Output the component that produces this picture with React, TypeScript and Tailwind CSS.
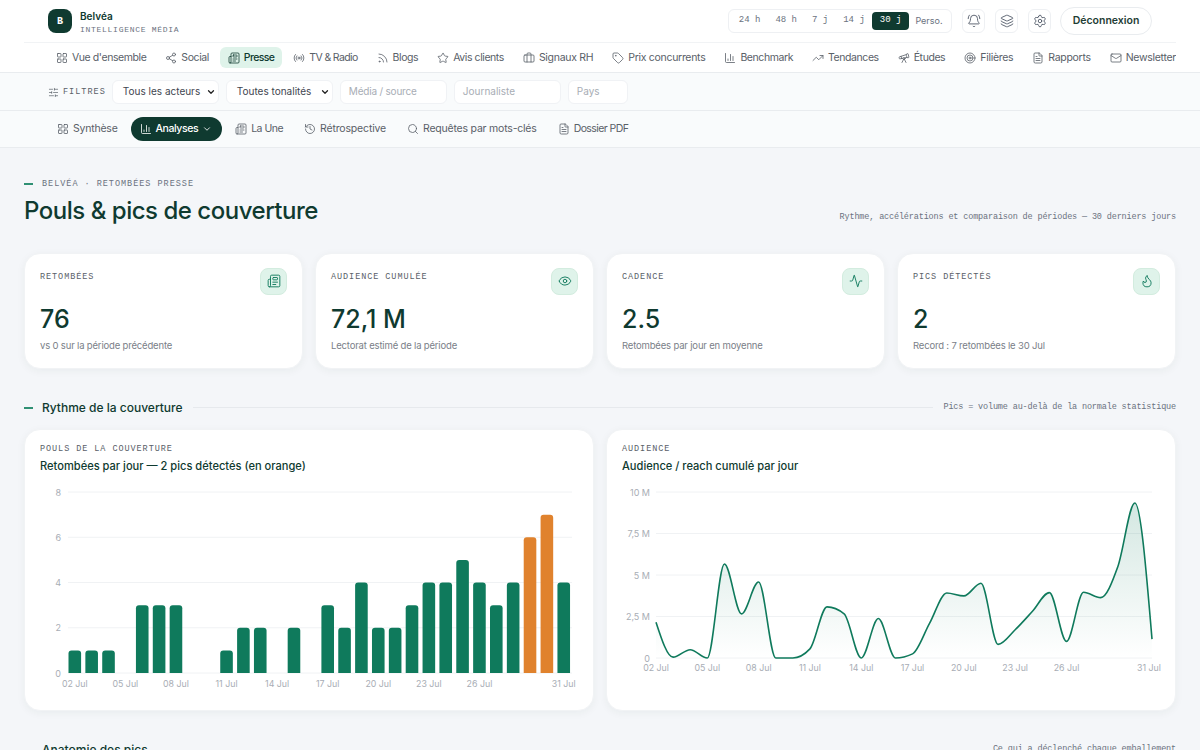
import {
  Activity,
  BellRing,
  Briefcase,
  ChartColumn,
  ChevronDown,
  Eye,
  FileText,
  Flame,
  History,
  Layers,
  LayoutGrid,
  Mail,
  Newspaper,
  Radio,
  Rss,
  Search,
  Settings,
  Share2,
  SlidersHorizontal,
  Star,
  Tag,
  Target,
  Telescope,
  TrendingUp,
} from "lucide-react";

const sans = "font-['Inter','Noto_Sans',sans-serif]";
const mono = "font-['Liberation_Mono','DejaVu_Sans_Mono',monospace]";

const mainNav = [
  { label: "Vue d'ensemble", icon: LayoutGrid, tight: "tracking-[-0.04em]" },
  { label: "Social", icon: Share2, tight: "tracking-[-0.04em]" },
  { label: "Presse", icon: Newspaper, active: true, tight: "tracking-[-0.06em]" },
  { label: "TV & Radio", icon: Radio, tight: "tracking-[-0.06em]" },
  { label: "Blogs", icon: Rss, tight: "tracking-[-0.04em]" },
  { label: "Avis clients", icon: Star, tight: "tracking-[-0.04em]" },
  { label: "Signaux RH", icon: Briefcase, tight: "tracking-[-0.028em]" },
  { label: "Prix concurrents", icon: Tag, tight: "tracking-[-0.028em]" },
  { label: "Benchmark", icon: ChartColumn, tight: "tracking-[-0.04em]" },
  { label: "Tendances", icon: TrendingUp, tight: "tracking-[-0.04em]" },
  { label: "Études", icon: Telescope, tight: "tracking-[-0.04em]" },
  { label: "Filières", icon: Target, tight: "tracking-[-0.028em]" },
  { label: "Rapports", icon: FileText, tight: "tracking-[-0.028em]" },
  { label: "Newsletter", icon: Mail, tight: "tracking-[-0.028em]" },
];

const subNav = [
  { label: "Synthèse", icon: LayoutGrid, tight: "tracking-[-0.02em]" },
  { label: "Analyses", icon: ChartColumn, active: true, tight: "tracking-[-0.04em]" },
  { label: "La Une", icon: Newspaper, tight: "tracking-[-0.05em]" },
  { label: "Rétrospective", icon: History, tight: "tracking-[-0.015em]" },
  { label: "Requêtes par mots-clés", icon: Search, tight: "tracking-[-0.02em]" },
  { label: "Dossier PDF", icon: FileText, tight: "tracking-[-0.055em]" },
];

const ranges = ["24 h", "48 h", "7 j", "14 j", "30 j"];

const kpis = [
  { label: "RETOMBÉES", value: "76", note: "vs 0 sur la période précédente", icon: Newspaper },
  { label: "AUDIENCE CUMULÉE", value: "72,1 M", note: "Lectorat estimé de la période", icon: Eye },
  { label: "CADENCE", value: "2.5", note: "Retombées par jour en moyenne", icon: Activity },
  { label: "PICS DÉTECTÉS", value: "2", note: "Record : 7 retombées le 30 Jul", icon: Flame },
];

const perDay = [1, 1, 1, 0, 3, 3, 3, 0, 0, 1, 2, 2, 0, 2, 0, 3, 2, 4, 2, 2, 3, 4, 4, 5, 4, 3, 4, 6, 7, 4];
const reach = [
  2.16, 0.05, 0.5, 0, 5.66, 2.66, 4.58, 0, 0, 0.55, 3.08, 2.66, 0, 2.38, 0, 0.25, 2.1, 3.92, 3.74, 4.5, 0.82, 1.7,
  2.8, 3.94, 1.0, 3.96, 3.64, 5.5, 9.34, 1.14,
];
const tickDays = [
  [0, "02 Jul"],
  [3, "05 Jul"],
  [6, "08 Jul"],
  [9, "11 Jul"],
  [12, "14 Jul"],
  [15, "17 Jul"],
  [18, "20 Jul"],
  [21, "23 Jul"],
  [24, "26 Jul"],
  [29, "31 Jul"],
] as const;

// same curve as d3 curveMonotoneX
function monotonePath(pts: [number, number][]) {
  const n = pts.length;
  const slopes: number[] = [];
  for (let i = 0; i < n - 1; i++) slopes.push((pts[i + 1][1] - pts[i][1]) / (pts[i + 1][0] - pts[i][0]));
  const t: number[] = new Array(n).fill(0);
  for (let i = 1; i < n - 1; i++) {
    const a = slopes[i - 1];
    const b = slopes[i];
    const s = (Math.sign(a) + Math.sign(b)) * Math.min(Math.abs(a), Math.abs(b), 0.25 * Math.abs(a + b));
    t[i] = s || 0;
  }
  t[0] = (3 * slopes[0] - t[1]) / 2;
  t[n - 1] = (3 * slopes[n - 2] - t[n - 2]) / 2;
  let d = `M${pts[0][0]},${pts[0][1]}`;
  for (let i = 0; i < n - 1; i++) {
    const h = (pts[i + 1][0] - pts[i][0]) / 3;
    d += `C${pts[i][0] + h},${pts[i][1] + h * t[i]} ${pts[i + 1][0] - h},${pts[i + 1][1] - h * t[i + 1]} ${pts[i + 1][0]},${pts[i + 1][1]}`;
  }
  return d;
}

function BarsChart() {
  const start = 28.5;
  const pitch = 16.86;
  const top = 8;
  const bottom = 189;
  const unit = (bottom - top) / 8;
  return (
    <svg width="544" height="212" className="block">
      {[8, 6, 4, 2, 0].map((v) => (
        <g key={v}>
          <line x1={28} x2={532} y1={bottom - v * unit} y2={bottom - v * unit} stroke="#f0f2f4" />
          <text x={21} y={bottom - v * unit + 3.5} textAnchor="end" fontSize="9" fill="#a8adb5" fontFamily="Inter">
            {v}
          </text>
        </g>
      ))}
      {perDay.map((v, i) =>
        v > 0 ? (
          <path
            key={i}
            d={`M${start + i * pitch},${bottom} v${-(v * unit - 3)} q0,-3 3,-3 h6.6 q3,0 3,3 V${bottom} z`}
            fill={i === 27 || i === 28 ? "#e0822d" : "#0f7a5c"}
          />
        ) : null,
      )}
      {tickDays.map(([i, label]) => (
        <text
          key={label}
          x={start + i * pitch + 6.3}
          y={203}
          textAnchor="middle"
          fontSize="8.8"
          fill="#a8adb5"
          fontFamily="Inter"
        >
          {label}
        </text>
      ))}
    </svg>
  );
}

function ReachChart() {
  const left = 34;
  const right = 530;
  const top = 8;
  const bottom = 174;
  const step = (right - left) / 29;
  const pts = reach.map((v, i) => [left + i * step, bottom - (v * (bottom - top)) / 10] as [number, number]);
  const line = monotonePath(pts);
  return (
    <svg width="544" height="212" className="block">
      <defs>
        <linearGradient id="reachFill" x1="0" y1="0" x2="0" y2="1">
          <stop offset="0%" stopColor="#0f7a5c" stopOpacity="0.18" />
          <stop offset="100%" stopColor="#0f7a5c" stopOpacity="0" />
        </linearGradient>
      </defs>
      {[
        [10, "10 M"],
        [7.5, "7,5 M"],
        [5, "5 M"],
        [2.5, "2,5 M"],
        [0, "0"],
      ].map(([v, label]) => {
        const y = bottom - ((v as number) * (bottom - top)) / 10;
        return (
          <g key={label}>
            <line x1={left} x2={right} y1={y} y2={y} stroke="#f0f2f4" />
            <text x={28} y={y + 3.5} textAnchor="end" fontSize="9" fill="#a8adb5" fontFamily="Inter">
              {label}
            </text>
          </g>
        );
      })}
      <path d={`${line}L${right},${bottom}L${left},${bottom}Z`} fill="url(#reachFill)" />
      <path d={line} fill="none" stroke="#0f7a5c" strokeWidth="1.6" />
      {tickDays.map(([i, label]) => (
        <text
          key={label}
          x={i === 29 ? 527 : left + i * step}
          y={187}
          textAnchor="middle"
          fontSize="8.8"
          fill="#a8adb5"
          fontFamily="Inter"
        >
          {label}
        </text>
      ))}
    </svg>
  );
}

export default function App() {
  return (
    <div className={`h-screen overflow-hidden bg-[#f4f6f9] text-[#0f3a30] ${sans}`}>
      {/* Header */}
      <header className="bg-white border-b border-[#e9ecef]">
        <div className="h-[43px] mx-6 px-6 flex items-center justify-between border-b border-[#f1f3f5]">
          <div className="flex items-center gap-2">
            <div className={`w-6 h-6 rounded-lg bg-[#0f3a30] text-white flex items-center justify-center text-[10px] font-bold ${mono}`}>
              B
            </div>
            <div className="pt-[4px]">
              <div className="text-[10px] leading-[14px] font-semibold">Belvéa</div>
              <div className={`text-[8px] leading-[14px] tracking-[0.09em] text-[#6b7280] ${mono}`}>INTELLIGENCE MÉDIA</div>
            </div>
          </div>
          <div className="flex items-center gap-[10px]">
            <div className="h-6 flex items-center rounded-md border border-[#eef0f3] px-[2px] bg-white">
              {ranges.map((r) => (
                <span
                  key={r}
                  className={`h-[18px] px-[7.5px] flex items-center justify-center rounded text-[9px] whitespace-pre ${mono} ${
                    r === "30 j" ? "bg-[#0f3a30] text-white" : "text-[#6b7280]"
                  }`}
                >
                  {r}
                </span>
              ))}
              <span className="px-[6.5px] text-center text-[9px] text-[#6b7280]">Perso.</span>
            </div>
            <div className="w-[23px] h-6 rounded-md border border-[#eef0f3] flex items-center justify-center text-[#4b5563]">
              <BellRing size={14} strokeWidth={1.5} />
            </div>
            <div className="w-[23px] h-6 rounded-md border border-[#eef0f3] flex items-center justify-center text-[#4b5563]">
              <Layers size={14} strokeWidth={1.5} />
            </div>
            <div className="w-[23px] h-6 rounded-md border border-[#eef0f3] flex items-center justify-center text-[#4b5563]">
              <Settings size={14} strokeWidth={1.5} />
            </div>
            <div className="h-7 w-[92px] rounded-full border border-[#e9ecef] flex items-center justify-center text-[10.5px] font-semibold text-[#1f3d35] -ml-[1px]">
              Déconnexion
            </div>
          </div>
        </div>
        <nav className="h-[29px] mx-6 pl-6 flex items-center gap-[3px] overflow-hidden">
          {mainNav.map((item) => {
            const Icon = item.icon;
            return (
              <div
                key={item.label}
                className={`h-[21px] px-2 shrink-0 flex items-center gap-[4px] rounded-md whitespace-nowrap text-[10.5px] ${item.tight} ${
                  item.active ? "bg-[#dff3ea] text-[#0f3a30] font-medium" : "text-[#596068]"
                }`}
              >
                <Icon size={12} strokeWidth={1.6} />
                {item.label}
              </div>
            );
          })}
        </nav>
      </header>

      {/* Filters */}
      <div className="h-[38px] bg-[#f9fbfc] border-b border-[#e9ecef] pl-12 flex items-center gap-[7px]">
        <div className={`flex items-center gap-[4px] -mr-[1px] mt-[1px] text-[8.5px] tracking-[0.12em] text-[#596068] ${mono}`}>
          <SlidersHorizontal size={11} strokeWidth={1.5} />
          FILTRES
        </div>
        {["Tous les acteurs", "Toutes tonalités"].map((s) => (
          <div key={s} className="w-[107px] h-6 bg-white border border-[#f0f2f5] rounded-md pl-[10px] pr-[2px] flex items-center justify-between text-[10px] text-[#3f4650]">
            {s}
            <ChevronDown size={10} strokeWidth={3} className="text-[#222]" />
          </div>
        ))}
        <div className="w-[107px] h-6 bg-white border border-[#f0f2f5] rounded-md px-2 flex items-center text-[10px] text-[#a8adb5] tracking-[-0.02em]">Média / source</div>
        <div className="w-[107px] h-6 bg-white border border-[#f0f2f5] rounded-md px-2 flex items-center text-[10px] text-[#a8adb5]">Journaliste</div>
        <div className="w-[60px] h-6 bg-white border border-[#f0f2f5] rounded-md px-2 flex items-center text-[10px] text-[#a8adb5]">Pays</div>
      </div>

      {/* Sub nav */}
      <div className="h-[37px] bg-[#f9fbfc] border-b border-[#e9ecef] pl-[49px] flex items-center gap-[5px]">
        {subNav.map((item) => {
          const Icon = item.icon;
          return (
            <div
              key={item.label}
              className={`h-6 flex items-center gap-[4px] rounded-full whitespace-nowrap text-[10.5px] ${item.tight} ${
                item.active ? "bg-[#0f3a30] text-white font-medium pl-[9px] pr-[10px]" : "px-2 text-[#596068]"
              }`}
            >
              <Icon size={12} strokeWidth={1.6} />
              {item.label}
              {item.active && <ChevronDown size={10} />}
            </div>
          );
        })}
      </div>

      <main className="px-6 pt-[30px]">
        {/* Title */}
        <div className={`flex items-center gap-[9px] text-[8.5px] tracking-[0.115em] text-[#6b7280] ${mono}`}>
          <span className="w-[9px] h-0.5 bg-[#2f9074]" />
          BELVÉA · RETOMBÉES PRESSE
        </div>
        <div className="flex items-end justify-between mt-[3px]">
          <h1 className="text-[24px] leading-[34px] font-medium tracking-[-0.02em]">Pouls & pics de couverture</h1>
          <div className={`text-[8.5px] leading-[14px] tracking-[-0.018em] text-[#6b7280] mb-[4px] ${mono}`}>
            Rythme, accélérations et comparaison de périodes — 30 derniers jours
          </div>
        </div>

        {/* KPI cards */}
        <div className="grid grid-cols-4 gap-3 mt-[25px]">
          {kpis.map((k) => {
            const Icon = k.icon;
            return (
              <div key={k.label} className="h-[116px] bg-white rounded-2xl border border-[#f1f3f5] shadow-[0_2px_8px_rgba(15,58,48,0.05)] px-[15px] pt-[16px] relative">
                <div className={`text-[8.5px] leading-[14px] tracking-[0.11em] text-[#596068] ${mono}`}>{k.label}</div>
                <div className="absolute right-[15px] top-[14px] w-[27px] h-[27px] rounded-lg bg-[#dff3ea] border border-[#d3ecdf] flex items-center justify-center text-[#0f7a5c]">
                  <Icon size={14} strokeWidth={1.6} />
                </div>
                <div className="text-[25px] leading-[32px] font-medium mt-[19px]">{k.value}</div>
                <div className="text-[9.5px] leading-[14px] tracking-[-0.018em] text-[#7a8088] mt-[4px]">{k.note}</div>
              </div>
            );
          })}
        </div>

        {/* Section */}
        <div className="flex items-center gap-[9px] mt-[32px] h-[14px]">
          <span className="w-[9px] h-0.5 bg-[#2f9074]" />
          <span className="text-[12px] font-medium whitespace-nowrap">Rythme de la couverture</span>
          <span className="flex-1 h-px bg-[#e6e9ed] ml-[1px]" />
          <span className={`text-[8.5px] tracking-[-0.018em] text-[#6b7280] ml-[1px] ${mono}`}>Pics = volume au-delà de la normale statistique</span>
        </div>

        {/* Charts */}
        <div className="grid grid-cols-2 gap-3 mt-[14px]">
          <div className="h-[282px] bg-white rounded-2xl border border-[#f1f3f5] shadow-[0_2px_8px_rgba(15,58,48,0.05)] px-[15px] pt-[12px]">
            <div className={`text-[8.5px] leading-[14px] tracking-[0.11em] text-[#596068] ${mono}`}>POULS DE LA COUVERTURE</div>
            <div className="text-[11.1px] leading-[16px] font-medium mt-[2px]">Retombées par jour — 2 pics détectés (en orange)</div>
            <div className="mt-[10px]">
              <BarsChart />
            </div>
          </div>
          <div className="h-[282px] bg-white rounded-2xl border border-[#f1f3f5] shadow-[0_2px_8px_rgba(15,58,48,0.05)] px-[15px] pt-[12px]">
            <div className={`text-[8.5px] leading-[14px] tracking-[0.11em] text-[#596068] ${mono}`}>AUDIENCE</div>
            <div className="text-[11.1px] leading-[16px] font-medium mt-[2px]">Audience / reach cumulé par jour</div>
            <div className="mt-[10px]">
              <ReachChart />
            </div>
          </div>
        </div>

        {/* Next section, cut by the window */}
        <div className="flex items-center justify-between mt-[30px] pl-[18px]">
          <span className="text-[12px] font-medium">Anatomie des pics</span>
          <span className={`text-[8.5px] tracking-[-0.018em] text-[#6b7280] ${mono}`}>Ce qui a déclenché chaque emballement</span>
        </div>
      </main>
    </div>
  );
}
